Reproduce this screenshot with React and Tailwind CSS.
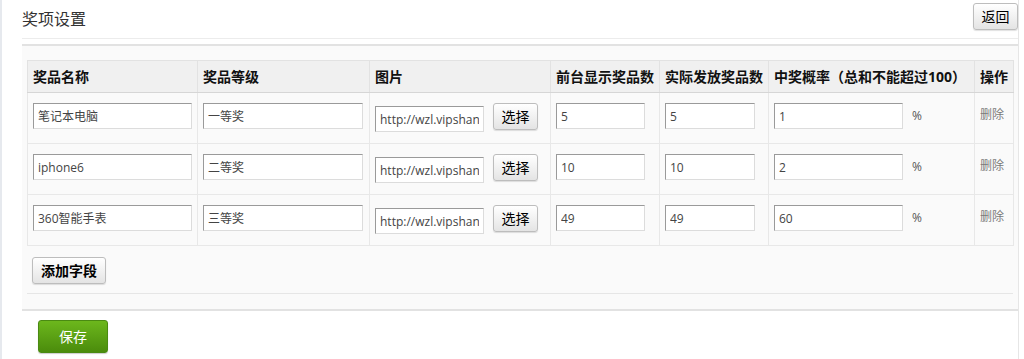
import React from "react";

const font = { fontFamily: '"Open Sans", "Noto Sans CJK SC", sans-serif' };

const rows = [
  { name: "笔记本电脑", level: "一等奖", show: "5", real: "5", rate: "1" },
  { name: "iphone6", level: "二等奖", show: "10", real: "10", rate: "2" },
  { name: "360智能手表", level: "三等奖", show: "49", real: "49", rate: "60" },
];

function Input({ value, className = "" }) {
  return (
    <input
      readOnly
      value={value}
      className={
        "block h-[26px] border border-t-[#9a9a9a] border-l-[#9a9a9a] border-b-[#dcdcdc] border-r-[#dcdcdc] bg-white px-[4px] text-[12px] text-[#444] outline-none " +
        className
      }
    />
  );
}

function GrayButton({ children, className = "" }) {
  return (
    <button
      className={
        "rounded-[3px] border border-[#bdbdbd] bg-gradient-to-b from-white to-[#e4e4e4] text-[14px] leading-none text-black shadow-[0_1px_1px_rgba(0,0,0,0.12)] " +
        className
      }
    >
      {children}
    </button>
  );
}

export default function App() {
  const th = "border border-[#e2e2e2] border-b-[#d6d6d6] bg-[#f0f0f0] pl-[5px] text-left text-[14px] font-bold text-[#111]";
  const td = "border border-[#e8e8e8] align-top pt-[10px] pl-[5px]";
  return (
    <div style={font} className="h-[359px] w-[1024px] overflow-hidden bg-white">
      <div className="h-full w-[1019px] border-l-2 border-r border-l-[#e6e9ee] border-r-[#e6e6e6] pl-[20px]">
        <div className="flex h-[39px] items-start justify-between border-b border-[#ececec]">
          <div className="pt-[9px] text-[16px] leading-[20px] text-[#333]">奖项设置</div>
          <GrayButton className="mt-[3px] h-[27px] w-[45px]">返回</GrayButton>
        </div>
        <div className="mt-[5px] border-t-2 border-b-2 border-[#e2e2e2] bg-[#fafafa] pb-[15px] pl-[5px] pr-[4px] pt-[14px]">
          <table className="w-[986px] table-fixed border-collapse">
            <colgroup>
              <col className="w-[170px]" />
              <col className="w-[172px]" />
              <col className="w-[181px]" />
              <col className="w-[109px]" />
              <col className="w-[109px]" />
              <col className="w-[206px]" />
              <col className="w-[39px]" />
            </colgroup>
            <thead>
              <tr className="h-[32px]">
                <th className={th}>奖品名称</th>
                <th className={th}>奖品等级</th>
                <th className={th}>图片</th>
                <th className={th}>前台显示奖品数</th>
                <th className={th}>实际发放奖品数</th>
                <th className={th}>中奖概率（总和不能超过100）</th>
                <th className={th}>操作</th>
              </tr>
            </thead>
            <tbody>
              {rows.map((r) => (
                <tr key={r.name} className="h-[51px]">
                  <td className={td}>
                    <Input value={r.name} className="w-[159px]" />
                  </td>
                  <td className={td}>
                    <Input value={r.level} className="w-[160px]" />
                  </td>
                  <td className={td}>
                    <div className="flex items-start">
                      <Input value="http://wzl.vipshang.com/upload/prize.jpg" className="mt-[3px] w-[109px]" />
                      <GrayButton className="ml-[9px] h-[27px] w-[45px]">选择</GrayButton>
                    </div>
                  </td>
                  <td className={td}>
                    <Input value={r.show} className="w-[89px]" />
                  </td>
                  <td className={td}>
                    <Input value={r.real} className="w-[90px]" />
                  </td>
                  <td className={td}>
                    <div className="flex items-center">
                      <Input value={r.rate} className="w-[129px]" />
                      <span className="ml-[9px] text-[12px] text-[#555]">%</span>
                    </div>
                  </td>
                  <td className="border border-[#e8e8e8] align-top pl-[5px] pt-[8px]">
                    <span className="text-[12px] leading-[14px] text-[#7a7a7a]">删除</span>
                  </td>
                </tr>
              ))}
            </tbody>
          </table>
          <div className="w-[986px] border-b border-[#e6e6e6] pb-[9px] pl-[5px] pt-[11px]">
            <GrayButton className="h-[27px] w-[74px] font-bold">添加字段</GrayButton>
          </div>
        </div>
        <div className="pl-[16px] pt-[9px]">
          <button className="h-[33px] w-[70px] rounded-[3px] border border-[#4a8a12] bg-gradient-to-b from-[#6cb71c] to-[#4b8c0c] text-[14px] text-white shadow-[0_1px_1px_rgba(0,0,0,0.2)]">
            保存
          </button>
        </div>
      </div>
    </div>
  );
}
